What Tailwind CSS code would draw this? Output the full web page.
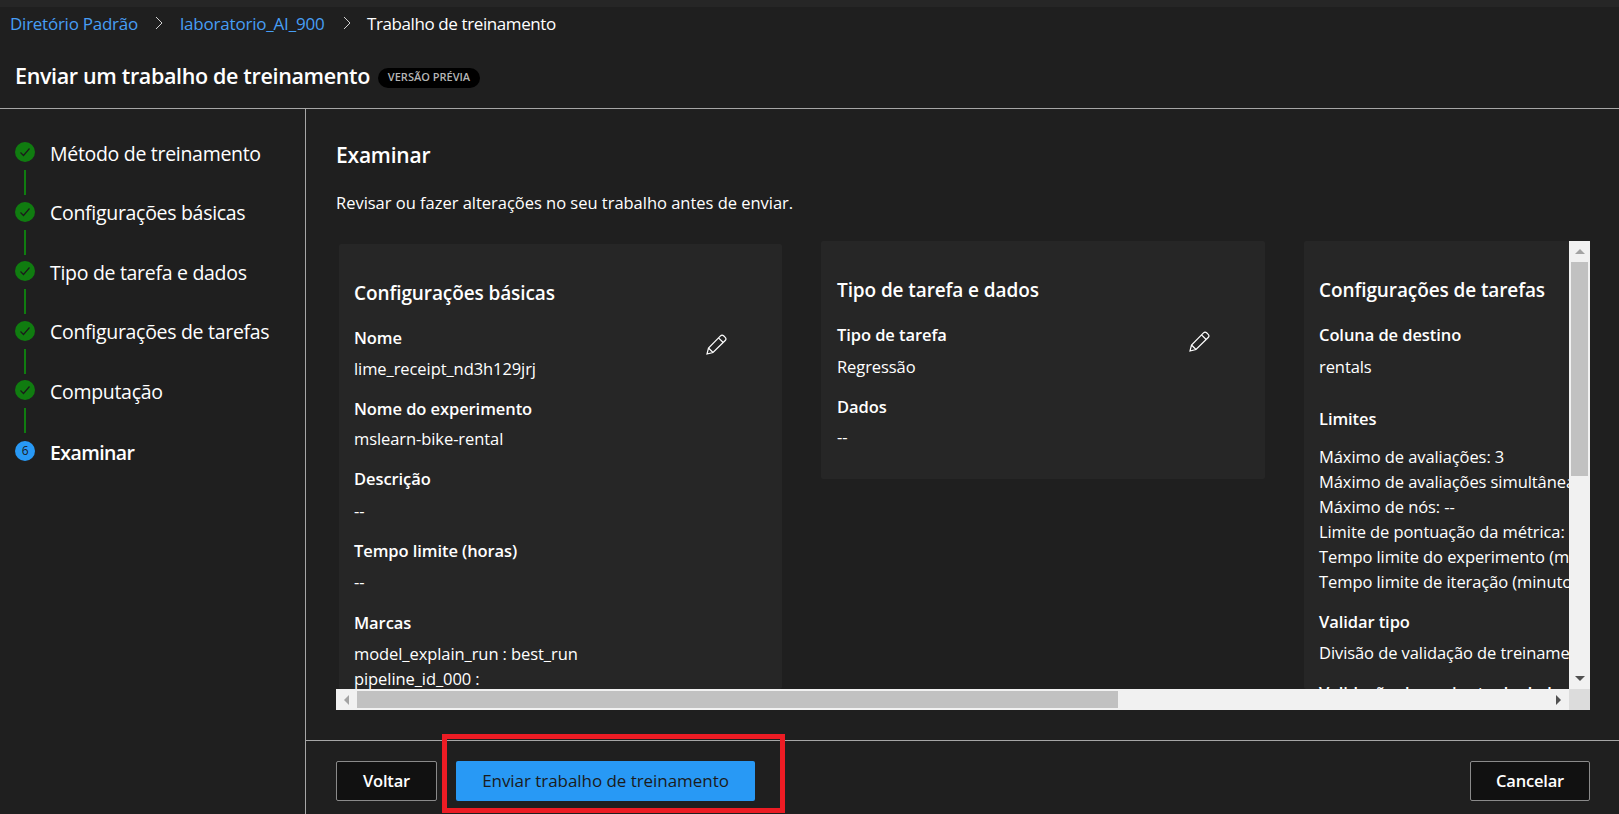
<!DOCTYPE html>
<html lang="pt">
<head>
    <meta charset="UTF-8">
    <title>Enviar um trabalho de treinamento</title>
    <script src="https://cdn.jsdelivr.net/npm/@tailwindcss/browser@4"></script>
</head>
<body class="bg-[#1f1f1f] text-white font-['Open_Sans',sans-serif]">
<div class="w-[1619px] h-[814px] overflow-hidden flex flex-col">
    <!-- Breadcrumb -->
    <div class="h-[7px] bg-[#262626]"></div>
    <nav class="h-[34px] flex items-center pl-[10px] text-[17px] whitespace-nowrap">
        <a class="text-[#479ef5] w-[145px] tracking-[-0.25px]">Diretório Padrão</a>
        <svg class="w-[8px] h-[14px] mr-[17px] -mt-[3px]" viewBox="0 0 8 14" fill="none" stroke="#d0d0d0" stroke-width="1"><path d="M1 1l6 6-6 6"/></svg>
        <a class="text-[#479ef5] w-[163px] tracking-[-0.2px]">laboratorio_AI_900</a>
        <svg class="w-[8px] h-[14px] mr-[16px] -mt-[3px]" viewBox="0 0 8 14" fill="none" stroke="#d0d0d0" stroke-width="1"><path d="M1 1l6 6-6 6"/></svg>
        <span class="tracking-[-0.4px]">Trabalho de treinamento</span>
    </nav>
    <!-- Title -->
    <header class="h-[68px] border-b border-[#a6a6a6] flex items-center pl-[15px] pt-[4px] gap-[8px] whitespace-nowrap">
        <h1 class="text-[21.5px] font-semibold tracking-[-0.35px]">Enviar um trabalho de treinamento</h1>
        <span class="w-[102px] h-[20px] rounded-full bg-black text-[#b5b5b5] text-[11px] font-semibold flex items-center justify-center mt-[2px]">VERSÃO PRÉVIA</span>
    </header>
    <div class="flex-1 flex min-h-0">
        <!-- Steps -->
        <aside class="w-[306px] shrink-0 border-r border-[#a6a6a6] pl-[15px] pt-[33px] text-[19.5px] tracking-[-0.3px]">
            <div class="flex items-center h-[20px] gap-[15px]">
                <span class="w-[20px] h-[20px] rounded-full bg-[#107c10] flex items-center justify-center"><svg class="w-[12px] h-[12px]" viewBox="0 0 12 12" fill="none" stroke="#1b1b1b" stroke-width="1.2"><path d="M1.5 6.5l3 3 6-7"/></svg></span>
                <span class="mt-[3px]">Método de treinamento</span>
            </div>
            <div class="w-[2px] h-[25px] bg-[#107c10] ml-[9px] mt-[8px] mb-[6.6px]"></div>
            <div class="flex items-center h-[20px] gap-[15px]">
                <span class="w-[20px] h-[20px] rounded-full bg-[#107c10] flex items-center justify-center"><svg class="w-[12px] h-[12px]" viewBox="0 0 12 12" fill="none" stroke="#1b1b1b" stroke-width="1.2"><path d="M1.5 6.5l3 3 6-7"/></svg></span>
                <span class="mt-[2px]">Configurações básicas</span>
            </div>
            <div class="w-[2px] h-[25px] bg-[#107c10] ml-[9px] mt-[8px] mb-[6.6px]"></div>
            <div class="flex items-center h-[20px] gap-[15px]">
                <span class="w-[20px] h-[20px] rounded-full bg-[#107c10] flex items-center justify-center"><svg class="w-[12px] h-[12px]" viewBox="0 0 12 12" fill="none" stroke="#1b1b1b" stroke-width="1.2"><path d="M1.5 6.5l3 3 6-7"/></svg></span>
                <span class="mt-[2px]">Tipo de tarefa e dados</span>
            </div>
            <div class="w-[2px] h-[25px] bg-[#107c10] ml-[9px] mt-[8px] mb-[6.6px]"></div>
            <div class="flex items-center h-[20px] gap-[15px]">
                <span class="w-[20px] h-[20px] rounded-full bg-[#107c10] flex items-center justify-center"><svg class="w-[12px] h-[12px]" viewBox="0 0 12 12" fill="none" stroke="#1b1b1b" stroke-width="1.2"><path d="M1.5 6.5l3 3 6-7"/></svg></span>
                <span class="mt-[2px]">Configurações de tarefas</span>
            </div>
            <div class="w-[2px] h-[25px] bg-[#107c10] ml-[9px] mt-[8px] mb-[6.6px]"></div>
            <div class="flex items-center h-[20px] gap-[15px]">
                <span class="w-[20px] h-[20px] rounded-full bg-[#107c10] flex items-center justify-center"><svg class="w-[12px] h-[12px]" viewBox="0 0 12 12" fill="none" stroke="#1b1b1b" stroke-width="1.2"><path d="M1.5 6.5l3 3 6-7"/></svg></span>
                <span class="mt-[2px]">Computação</span>
            </div>
            <div class="w-[2px] h-[25px] bg-[#107c10] ml-[9px] mt-[8px] mb-[8px]"></div>
            <div class="flex items-center h-[20px] gap-[15px]">
                <span class="w-[20px] h-[20px] rounded-full bg-[#2899f5] text-[#1b1b1b] text-[12px] flex items-center justify-center">6</span>
                <span class="font-semibold mt-[2px] tracking-[-0.6px]">Examinar</span>
            </div>
        </aside>
        <!-- Review -->
        <main class="flex-1 min-w-0 flex flex-col">
            <div class="h-[631px] pl-[30px] pr-[29px] flex flex-col">
                <h2 class="text-[21px] font-semibold tracking-[-0.2px] leading-[28px] mt-[32px]">Examinar</h2>
                <p class="text-[16.5px] tracking-[-0.02px] leading-[24px] mt-[22px]">Revisar ou fazer alterações no seu trabalho antes de enviar.</p>
                <div class="mt-[26px] h-[469px] flex flex-col bg-[#1f1f1f]">
                    <div class="flex-1 min-h-0 flex">
                        <div class="flex-1 min-w-0 overflow-hidden flex items-start pl-[3px] gap-[39px] text-[16.5px] tracking-[-0.08px] leading-[25px] whitespace-nowrap">
                            <!-- Card 1 -->
                            <section class="relative w-[443px] shrink-0 h-[445px] mt-[3px] bg-[#262626] rounded-[2px] pl-[15px] pt-[36px]">
                                <h3 class="text-[19px] font-semibold leading-[26px] tracking-[-0.1px]">Configurações básicas</h3>
                                <svg class="absolute left-[367px] top-[90px] w-[21px] h-[21px]" viewBox="0 0 21 21" fill="none" stroke="#fff" stroke-width="1.2"><path d="M1 20l1.5-6L14.5 1.8a2.2 2.2 0 0 1 3.1 0l1.6 1.6a2.2 2.2 0 0 1 0 3.1L7 18.5zM2.5 14l4.5 4.5M12.5 3.8l4.7 4.7"/></svg>
                                <h4 class="font-semibold mt-[19px]">Nome</h4>
                                <p class="mt-[6px]">lime_receipt_nd3h129jrj</p>
                                <h4 class="font-semibold mt-[15px]">Nome do experimento</h4>
                                <p class="mt-[5px]">mslearn-bike-rental</p>
                                <h4 class="font-semibold mt-[15px]">Descrição</h4>
                                <p class="mt-[7px]">--</p>
                                <h4 class="font-semibold mt-[15px]">Tempo limite (horas)</h4>
                                <p class="mt-[6px]">--</p>
                                <h4 class="font-semibold mt-[16px]">Marcas</h4>
                                <p class="mt-[6px]">model_explain_run : best_run</p>
                                <p>pipeline_id_000 :</p>
                            </section>
                            <!-- Card 2 -->
                            <section class="relative w-[444px] shrink-0 h-[238px] bg-[#262626] rounded-[2px] pl-[16px] pt-[36px]">
                                <h3 class="text-[19px] font-semibold leading-[26px] tracking-[-0.1px]">Tipo de tarefa e dados</h3>
                                <svg class="absolute left-[368px] top-[90px] w-[21px] h-[21px]" viewBox="0 0 21 21" fill="none" stroke="#fff" stroke-width="1.2"><path d="M1 20l1.5-6L14.5 1.8a2.2 2.2 0 0 1 3.1 0l1.6 1.6a2.2 2.2 0 0 1 0 3.1L7 18.5zM2.5 14l4.5 4.5M12.5 3.8l4.7 4.7"/></svg>
                                <h4 class="font-semibold mt-[19px]">Tipo de tarefa</h4>
                                <p class="mt-[7px]">Regressão</p>
                                <h4 class="font-semibold mt-[15px]">Dados</h4>
                                <p class="mt-[5px]">--</p>
                            </section>
                            <!-- Card 3 -->
                            <section class="w-[445px] shrink-0 h-[448px] bg-[#262626] rounded-[2px] pl-[15px] pt-[36px]">
                                <h3 class="text-[19px] font-semibold leading-[26px] tracking-[-0.1px]">Configurações de tarefas</h3>
                                <h4 class="font-semibold mt-[19px]">Coluna de destino</h4>
                                <p class="mt-[7px]">rentals</p>
                                <h4 class="font-semibold mt-[27px]">Limites</h4>
                                <p class="mt-[13px]">Máximo de avaliações: 3</p>
                                <p>Máximo de avaliações simultâneas: 3</p>
                                <p>Máximo de nós: --</p>
                                <p>Limite de pontuação da métrica: --</p>
                                <p>Tempo limite do experimento (minutos): 15</p>
                                <p>Tempo limite de iteração (minutos): 15</p>
                                <h4 class="font-semibold mt-[15px]">Validar tipo</h4>
                                <p class="mt-[6px]">Divisão de validação de treinamento</p>
                                <h4 class="font-semibold mt-[15px]">Validação do conjunto de dados de teste</h4>
                            </section>
                        </div>
                        <!-- Vertical scrollbar -->
                        <div class="w-[21px] shrink-0 bg-[#f1f1f1] flex flex-col items-center">
                            <div class="h-[21px] flex items-center justify-center"><span class="w-0 h-0 border-x-[5px] border-x-transparent border-b-[5px] border-b-[#a3a3a3]"></span></div>
                            <div class="w-[17px] h-[214px] bg-[#c1c1c1]"></div>
                            <div class="flex-1"></div>
                            <div class="h-[21px] flex items-center justify-center"><span class="w-0 h-0 border-x-[5px] border-x-transparent border-t-[5px] border-t-[#505050]"></span></div>
                        </div>
                    </div>
                    <!-- Horizontal scrollbar -->
                    <div class="h-[21px] shrink-0 bg-[#f1f1f1] flex items-center">
                        <div class="w-[21px] flex items-center justify-center"><span class="w-0 h-0 border-y-[5px] border-y-transparent border-r-[5px] border-r-[#a3a3a3]"></span></div>
                        <div class="w-[761px] h-[17px] bg-[#c1c1c1]"></div>
                        <div class="flex-1"></div>
                        <div class="w-[21px] flex items-center justify-center"><span class="w-0 h-0 border-y-[5px] border-y-transparent border-l-[5px] border-l-[#505050]"></span></div>
                        <div class="w-[21px] h-[21px] bg-[#dcdcdc]"></div>
                    </div>
                </div>
            </div>
            <!-- Footer -->
            <footer class="relative flex-1 border-t border-[#a6a6a6] pl-[30px] pr-[29px] pt-[20px] flex items-start text-[16.5px] tracking-[-0.2px]">
                <button class="w-[101px] h-[40px] bg-[#111111] border border-[#8a8a8a] rounded-[2px] font-semibold">Voltar</button>
                <button class="w-[299px] h-[40px] ml-[19px] bg-[#2899f5] text-[#1b1b1b] rounded-[2px] text-[17px] tracking-[-0.05px]">Enviar trabalho de treinamento</button>
                <button class="w-[120px] h-[40px] ml-auto bg-[#111111] border border-[#8a8a8a] rounded-[2px] font-semibold">Cancelar</button>
                <div class="absolute left-[136px] top-[-7px] w-[343px] h-[79px] border-[5px] border-[#ed1c24]"></div>
            </footer>
        </main>
    </div>
</div>
</body>
</html>
